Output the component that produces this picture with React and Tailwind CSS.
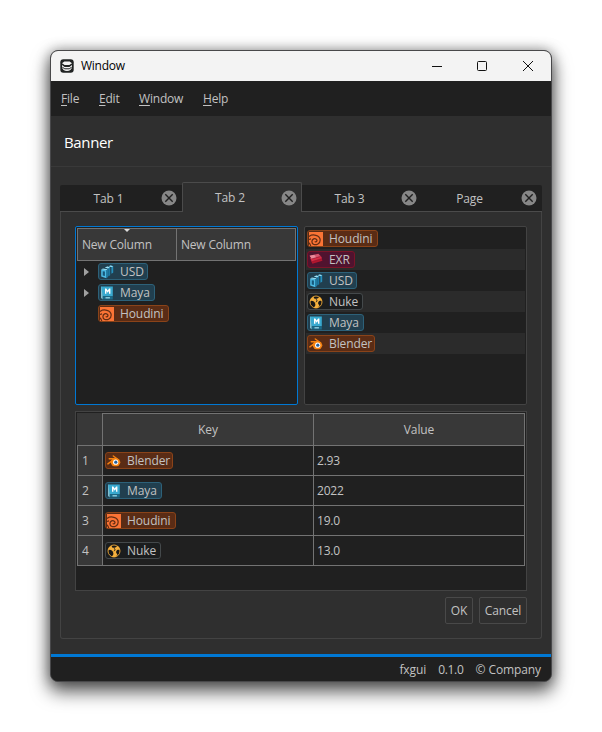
import React from "react";

function UsdIcon() {
  return (
    <svg width="14" height="14" viewBox="0 0 14 14">
      <path d="M8.6 1.2l2-.7 2.6.6v6.6l-1.8 1.1V2.3z" fill="#2590bd" />
      <path d="M4.8 2.4l2.6-.9 2.8.8v7.9l-2 1.2V4z" fill="#1c7ba6" />
      <path d="M4.8 2.4l2.6-.9 2.4.7-1.8 1.2zM8.6 1.2l2-.7 2.6.7-1.7.9z" fill="#a2e2f5" />
      <path d="M1.2 4.4l5.2.8v8L1.2 11.6z" fill="#4dbbe4" />
      <path d="M2.7 6.2l2.2.4v4.5l-2.2-.7z" fill="#17587a" />
      <path d="M1.2 4.4l1.7-1 4.9.8-1.4 1z" fill="#8fdaf2" />
      <path d="M6.4 5.2l1.4-1v7.7l-1.4 1.3z" fill="#2088b6" />
    </svg>
  );
}

function MayaIcon() {
  return (
    <svg width="14" height="14" viewBox="0 0 14 14">
      <path d="M1.2.5l1.5 1v12L1.2 12z" fill="#9ee0ee" />
      <path d="M1.2.5h11.6v9.7H2.7z" fill="#38a9cf" />
      <path d="M2.7 10.2h10.1v3.3H2.7z" fill="#1b6a88" />
      <path d="M5 7.8V2.4h1.3l1.4 2.2 1.4-2.2h1.3v5.4H9V4.9L7.7 6.7 6.4 4.9v2.9z" fill="#fff" />
      <path d="M5.5 11.8h4.4" stroke="#9ad5e4" strokeWidth="1.3" />
    </svg>
  );
}

function HoudiniIcon() {
  return (
    <svg width="14" height="14" viewBox="0 0 14 14">
      <path d="M0 0h14v14H0z" fill="#fb7435" />
      <path d="M0 4.4C3.6 1.8 11 2.8 11.2 8c0 3.7-3.8 5.3-6.4 4.5-2.5-.9-2.5-4.5-.2-5.6 2-.8 4 .7 3.1 2.4-.4.8-1.4.8-2 .3" fill="none" stroke="#632d13" strokeWidth="1.25" />
      <path d="M0 7.6c.8-.5 1.3-.7 2-.8M0 10.8c.7.5 1.2 1.6 1.8 3.2" fill="none" stroke="#632d13" strokeWidth="1.2" />
    </svg>
  );
}

function ExrIcon() {
  return (
    <svg width="14" height="14" viewBox="0 0 14 14">
      <path d="M1.8 7.5l10.8-2.6.8 2.9L3.4 10.8z" fill="#b3162d" />
      <path d="M1 5l10.8-2.2 1.3 2.6L3 8.5z" fill="#d72d45" />
      <path d="M.6 2.8L9.4.8l2.2 2.5L2.8 5.7z" fill="#d4566f" />
      <path d="M.6 2.8l4.6-1 2 2.6-4.4 1.3z" fill="#e78b9b" />
      <path d="M2.8 5.9l8.9-2.4M3.2 8.6l9.8-3" stroke="#8d1230" strokeWidth=".6" />
    </svg>
  );
}

function NukeIcon() {
  return (
    <svg width="14" height="14" viewBox="0 0 14 14">
      <circle cx="7" cy="7" r="6" fill="#171717" stroke="#d99a34" strokeWidth="1" />
      <path d="M1 6.4C1.2 4 2.8 2 4.8 1.4c-.3 1.2.3 2.3 1.8 2.4 1.1.1 2.1-.2 2.6-1L10.8 2c1.3 1 2.1 2.4 2.2 4.2-1.4-.8-3-.4-3.6.8-.6 1.1-.3 2.4 1 3.3l-1.1 2.2c-1.5.7-3.3.7-4.7-.1 1.4-.7 2-2 1.7-3.3C6 7.9 5.7 7 4.8 6.5 3.6 5.6 2 5.5 1 6.4z" fill="#f4b03d" />
      <path d="M7.2 4.1l1 2-1.4 1" fill="none" stroke="#171717" strokeWidth=".8" />
    </svg>
  );
}

function BlenderIcon() {
  return (
    <svg width="14" height="14" viewBox="0 0 14 14">
      <path d="M6.3 2l5.2 3.8M2.2 4.8h6.6M.9 9.9L6 6" stroke="#f58210" strokeWidth="1.4" strokeLinecap="round" />
      <ellipse cx="8.5" cy="8.3" rx="4.8" ry="4" fill="#f58210" />
      <circle cx="8.7" cy="8.2" r="2.6" fill="#fff" />
      <circle cx="8.8" cy="8.2" r="1.6" fill="#24609f" />
    </svg>
  );
}

const KINDS = {
  USD: { icon: UsdIcon, box: "w-[50px] bg-[#213f4f] border-[#2d6179]" },
  Maya: { icon: MayaIcon, box: "w-[57px] bg-[#213f4f] border-[#2d6179]" },
  Houdini: { icon: HoudiniIcon, box: "w-[71px] bg-[#5a2c15] border-[#8a4319]" },
  Blender: { icon: BlenderIcon, box: "w-[68px] bg-[#5a2c15] border-[#8a4319]" },
  EXR: { icon: ExrIcon, box: "w-[48px] bg-[#50132f] border-[#7c1429]" },
  Nuke: { icon: NukeIcon, box: "w-[56px] bg-[#1b1d1e] border-[#44494b]" },
};

function Badge({ name }) {
  const { icon: Icon, box } = KINDS[name];
  return (
    <div className={`flex h-[17px] shrink-0 items-center rounded-[3px] border pl-px ${box}`}>
      <Icon />
      <span className="ml-[6px] leading-[15px]">{name}</span>
    </div>
  );
}

function CloseIcon() {
  return (
    <svg width="16" height="16" viewBox="0 0 16 16" className="shrink-0">
      <circle cx="8" cy="8" r="7.5" fill="#878787" />
      <path d="M4.3 4.3l7.4 7.4M11.7 4.3l-7.4 7.4" stroke="#202020" strokeWidth="1.4" />
    </svg>
  );
}

function Tab({ label, className, labelClass }) {
  return (
    <div className={`flex ${className}`}>
      <span className={`flex-1 text-center ${labelClass}`}>{label}</span>
      <CloseIcon />
    </div>
  );
}

function TreeRow({ name, expandable }) {
  return (
    <div className="flex h-[21px] items-center pl-[7px]">
      <svg width="5" height="8" viewBox="0 0 5 8" className="mr-[9px]">
        {expandable && <path d="M0 0l5 4-5 4z" fill="#a0a0a0" />}
      </svg>
      <Badge name={name} />
    </div>
  );
}

const ROWS = [
  ["Blender", "2.93"],
  ["Maya", "2022"],
  ["Houdini", "19.0"],
  ["Nuke", "13.0"],
];

export default function App() {
  return (
    <div className="h-[732px] w-[602px] overflow-hidden bg-white p-[50px] font-['Open_Sans','Noto_Sans',sans-serif] text-[12px] leading-[16px] tracking-[-0.1px] text-[#c2c2c2]">
      <div className="flex h-[632px] w-[502px] flex-col overflow-hidden rounded-[8px] border border-[#48484a] bg-[#2f2f2f] shadow-[0_9px_18px_1px_rgba(0,0,0,0.62),0_0_13px_rgba(0,0,0,0.35)]">
        <div className="flex h-[30px] shrink-0 items-center bg-[#f3f3f3] text-black">
          <svg width="14" height="14" viewBox="0 0 14 14" className="mb-[1px] ml-[9px]">
            <rect x=".3" y=".3" width="13.4" height="13.4" rx="3" fill="#202323" />
            <path d="M2 4.2L4.4 2.4h5.2L12 4.2 9.4 6H4.6z" fill="#f3f3f3" />
            <path d="M2 6l2.6 1.9h4.8L12 6v2.2C11.5 10.6 9.8 12 7 12S2.500 10.600 2 8.200z" fill="#f3f3f3" />
            <path d="M2.300 8.200L4.800 9.800h4.400l2.500-1.600" fill="none" stroke="#202323" strokeWidth="1" />
          </svg>
          <span className="ml-[7px] flex-1 tracking-[-0.25px]">Window</span>
          <svg width="110" height="12" viewBox="0 0 110 12" fill="none" stroke="#111" className="mr-[14px] mb-[1px]">
            <path d="M5 6.5h10" />
            <rect x="50.5" y="1.5" width="9" height="9" rx="1" />
            <path d="M96 1l10 10M106 1L96 11" />
          </svg>
        </div>
        <div className="flex h-[35px] shrink-0 items-center bg-[#202020] pl-[10px] tracking-[-0.2px]">
          <span className="w-[38px]"><u className="underline-offset-2">F</u>ile</span>
          <span className="w-[40px]"><u className="underline-offset-2">E</u>dit</span>
          <span className="w-[64px]"><u className="underline-offset-2">W</u>indow</span>
          <span><u className="underline-offset-2">H</u>elp</span>
        </div>
        <div className="flex h-[51px] shrink-0 items-center border-b border-[#393939] pl-[13px] pt-[1px] text-[15px] tracking-[-0.35px] text-white">Banner</div>

        <div className="mt-[15px] ml-[9px] flex h-[30px] w-[482px] shrink-0 items-end">
          <Tab label="Tab 1" className="h-[27px] w-[122px] rounded-tl-[2px] border-b border-[#4b4b4b] bg-[#202020] pt-[5px] pr-[5px]" labelClass="pt-[1px] pr-[4px]" />
          <Tab label="Tab 2" className="h-[30px] w-[120px] rounded-t-[2px] border border-b-0 border-[#4b4b4b] pt-[7px] pr-[4px]" labelClass="pr-[4px]" />
          <Tab label="Tab 3" className="h-[27px] w-[120px] border-b border-[#4b4b4b] bg-[#202020] pt-[5px] pr-[5px]" labelClass="pt-[1px] pr-[4px]" />
          <Tab label="Page" className="h-[27px] w-[120px] rounded-tr-[2px] border-b border-[#4b4b4b] bg-[#202020] pt-[5px] pr-[5px]" labelClass="pt-[1px] pr-[4px]" />
        </div>

        <div className="ml-[9px] flex h-[427px] w-[482px] shrink-0 flex-col rounded-b-[3px] border border-t-0 border-[#434343] px-[14px] pt-[14px]">
          <div className="flex gap-[6px]">
            <div className="h-[179px] w-[223px] rounded-[2px] border border-[#0078d4] bg-[#202020] p-px">
              <div className="relative flex h-[33px] border border-[#737373] bg-[#383838] leading-[32px] tracking-[-0.2px]">
                <span className="w-[99px] border-r border-[#737373] pl-[4px]">New Column</span>
                <span className="pl-[4px]">New Column</span>
                <svg width="6" height="3" viewBox="0 0 6 3" className="absolute top-0 left-[46px]">
                  <path d="M0 0h6L3 3z" fill="#ddd" />
                </svg>
              </div>
              <TreeRow name="USD" expandable />
              <TreeRow name="Maya" expandable />
              <TreeRow name="Houdini" />
            </div>
            <div className="h-[179px] w-[223px] rounded-[2px] border border-[#434343] bg-[#202020] p-px">
              {["Houdini", "EXR", "USD", "Nuke", "Maya", "Blender"].map((name) => (
                <div key={name} className="flex h-[21px] items-center pl-px even:bg-[#2b2b2b]">
                  <Badge name={name} />
                </div>
              ))}
            </div>
          </div>

          <div className="mt-[6px] h-[180px] w-[452px] border border-[#434343] bg-[#202020] p-px">
            <div className="flex h-[33px] w-[448px] border-b border-[#737373] bg-[#383838] text-center leading-[32px]">
              <div className="w-[25px]" />
              <div className="w-[211px] border-t border-l border-[#737373]">Key</div>
              <div className="w-[212px] border-x border-t border-[#737373]">Value</div>
            </div>
            {ROWS.map(([name, value], i) => (
              <div key={name} className="flex h-[30px] w-[448px] border-b border-l border-[#737373] leading-[30px]">
                <div className="w-[24px] bg-[#383838] pl-[4px]">{i + 1}</div>
                <div className="flex w-[211px] items-center border-l border-[#737373] pl-[2px]">
                  <Badge name={name} />
                </div>
                <div className="w-[212px] border-x border-[#737373] pl-[3px] tracking-[-0.2px]">{value}</div>
              </div>
            ))}
          </div>

          <div className="mt-[6px] flex justify-end gap-[6px] text-center leading-[25px]">
            <div className="h-[27px] w-[28px] rounded-[2px] border border-[#494949]">OK</div>
            <div className="h-[27px] w-[48px] rounded-[2px] border border-[#494949]">Cancel</div>
          </div>
        </div>

        <div className="mt-[15px] flex h-[28px] shrink-0 items-center justify-end gap-[12px] border-t-[3px] border-[#0078d4] bg-[#202020] pr-[10px]">
          <span>fxgui</span>
          <span className="tracking-[-0.3px]">0.1.0</span>
          <span>© Company</span>
        </div>
      </div>
    </div>
  );
}
